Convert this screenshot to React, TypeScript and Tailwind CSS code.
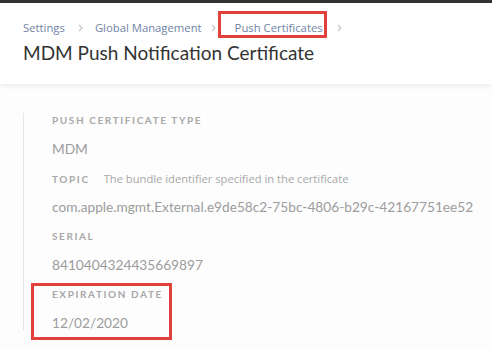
import React from "react";

const font = { fontFamily: "Lato, 'Open Sans', sans-serif" };
const open = { fontFamily: "'Open Sans', Lato, sans-serif" };

function Chevron({ cls }: { cls: string }) {
  return (
    <svg width="5" height="8" viewBox="0 0 5 8" className={cls}>
      <path d="M1 1l3 3-3 3" fill="none" stroke="#c4c4c4" strokeWidth="1.1" />
    </svg>
  );
}

function Field({ label, desc, value }: { label: string; desc?: string; value: string }) {
  return (
    <div className="flex flex-col">
      <div className="flex items-baseline h-[22px]">
        <span className="text-[10px] font-bold tracking-[1.6px] text-[#a8a8a8] uppercase">{label}</span>
        {desc && (
          <span className="ml-[14px] text-[11.2px] text-[#a8a8a8]" style={open}>
            {desc}
          </span>
        )}
      </div>
      <div className="h-[36px] pt-[4px] text-[13.7px] text-[#9c9c9c]">{value}</div>
    </div>
  );
}

export default function App() {
  return (
    <div className="relative w-[492px] h-[349px] bg-[#fdfdfd] overflow-hidden" style={font}>
      <div className="h-[3px] bg-[#333333]" />
      <div className="relative bg-white h-[81px] px-[23px] pt-[15px] shadow-[0_2px_5px_rgba(0,0,0,0.08)]">
        <div className="flex items-center h-[20px] text-[11.3px] text-[#6f83a6]" style={open}>
          <span>Settings</span>
          <Chevron cls="ml-[13px] mr-[12px]" />
          <span>Global Management</span>
          <Chevron cls="ml-[9px] mr-[19px]" />
          <span>Push Certificates</span>
          <Chevron cls="ml-[14px]" />
        </div>
        <div className="mt-[3px] text-[19px] text-[#333333] leading-[24px]">MDM Push Notification Certificate</div>
      </div>
      <div className="pl-[23px] pt-[29px]">
        <div className="border-l border-[#e6e6e6] pl-[28px] h-[217px]">
          <Field label="Push Certificate Type" value="MDM" />
          <Field label="Topic" desc="The bundle identifier specified in the certificate" value="com.apple.mgmt.External.e9de58c2-75bc-4806-b29c-42167751ee52" />
          <Field label="Serial" value="8410404324435669897" />
          <Field label="Expiration Date" value="12/02/2020" />
        </div>
      </div>
      <div className="absolute left-[218px] top-[11px] w-[109px] h-[27px] border-[3px] border-[#e2403a]" />
      <div className="absolute left-[31px] top-[283px] w-[141px] h-[57px] border-[3px] border-[#e2403a]" />
    </div>
  );
}
